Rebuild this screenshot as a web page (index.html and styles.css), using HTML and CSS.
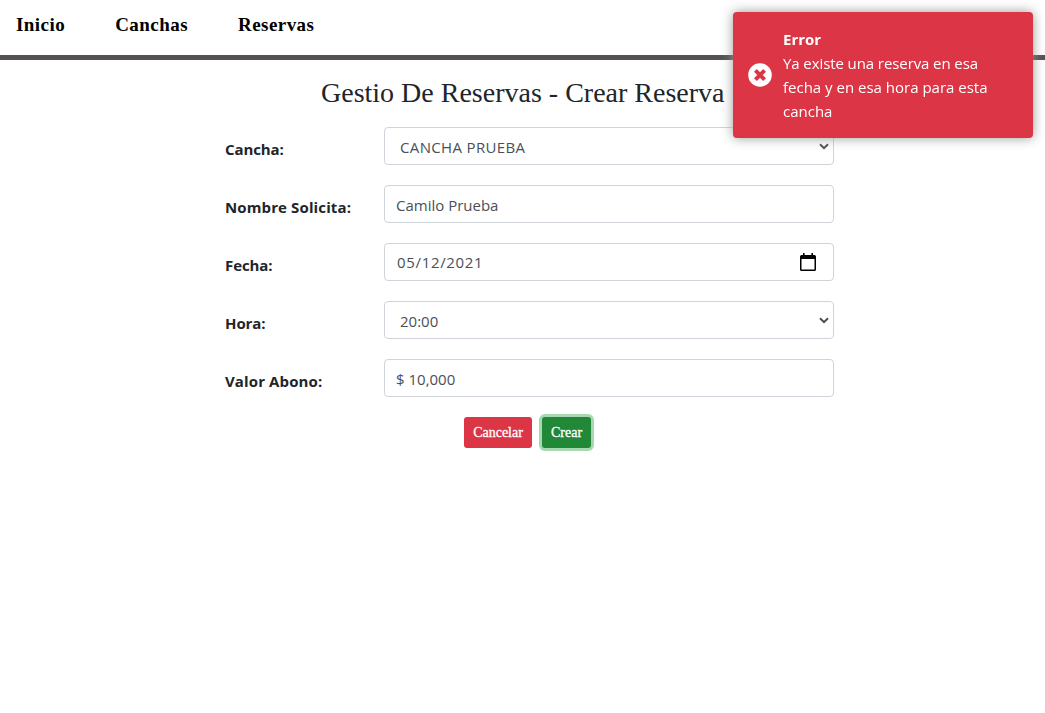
FILE: index.html
```html
<!DOCTYPE html>
<html lang="es">
<head>
<meta charset="utf-8">
<title>Gestio De Reservas</title>
<link rel="stylesheet" href="styles.css">
</head>
<body>
<nav class="nav"><a>Inicio</a><a>Canchas</a><a>Reservas</a></nav>
<main class="page">
  <h3 class="title">Gestio De Reservas - Crear Reserva</h3>
  <form class="form">
    <div class="row"><label class="label">Cancha:</label><div class="control select"><span class="caps">CANCHA PRUEBA</span><svg class="chevron" width="10" height="7" viewBox="0 0 10 7"><path d="M1 1.2l4 4 4-4" fill="none" stroke="#495057" stroke-width="2"/></svg></div></div>
    <div class="row"><label class="label label-wide">Nombre Solicita:</label><div class="control"><span>Camilo Prueba</span></div></div>
    <div class="row"><label class="label">Fecha:</label><div class="control date"><span class="day">05/12/2021</span><svg class="calendar" width="16" height="18" viewBox="0 0 16 18"><path d="M3 0h1.6v2h6.8V0H13v2h1.4A1.6 1.6 0 0 1 16 3.600V16.400A1.600 1.600 0 0 1 14.400 18H1.600A1.600 1.600 0 0 1 0 16.400V3.600A1.600 1.600 0 0 1 1.600 2H3zM1.500 6v10.500h13V6z" fill="#000" fill-rule="evenodd"/></svg></div></div>
    <div class="row"><label class="label">Hora:</label><div class="control select"><span>20:00</span><svg class="chevron" width="10" height="7" viewBox="0 0 10 7"><path d="M1 1.2l4 4 4-4" fill="none" stroke="#495057" stroke-width="2"/></svg></div></div>
    <div class="row"><label class="label label-wide">Valor Abono:</label><div class="control"><span>$ 10,000</span></div></div>
    <div class="actions"><button type="button" class="btn cancel">Cancelar</button><button type="button" class="btn create">Crear</button></div>
  </form>
</main>
<aside class="toast">
  <svg class="toast-icon" width="24" height="24" viewBox="0 0 24 24"><circle cx="12" cy="12" r="11.800" fill="#fff"/><path d="M7.400 7.400l9.200 9.200M16.600 7.400l-9.200 9.200" stroke="#dc3545" stroke-width="4"/></svg>
  <div class="toast-text"><strong>Error</strong><span class="line-first">Ya existe una reserva en esa</span><span>fecha y en esa hora para esta</span><span>cancha</span></div>
</aside>
</body>
</html>
```
FILE: styles.css
```css
* { box-sizing: border-box; }
body { margin: 0; min-height: 100vh; background: #fff; color: #212529; font: 15px/24px "Open Sans", "Noto Sans", sans-serif; }
.nav { height: 60px; padding: 10px 16px 0; border-bottom: 5px solid #545150; display: flex; gap: 50px; font: bold 19px/30px "Liberation Serif", serif; letter-spacing: .45px; color: #000; }
.page { padding: 16px 0 20px; }
.title { margin: 0; padding-left: 321px; font: 400 28px/34px "Liberation Serif", serif; white-space: nowrap; }
.form { width: 609px; margin: 17px 0 0 225px; }
.row { display: flex; height: 38px; margin-bottom: 20px; }
.label { width: 159px; padding-top: 10px; font-weight: 700; letter-spacing: -.1px; white-space: nowrap; }
.label-wide { letter-spacing: .12px; }
.control { flex: 1; display: flex; align-items: center; justify-content: space-between; padding: 2px 16px 0 11px; border: 1px solid #ced4da; border-radius: 4px; color: #495057; }
.select { padding: 2px 4px 0 15px; }
.date { padding: 0 17px 0 12px; }
.caps { letter-spacing: .35px; }
.day { letter-spacing: .67px; }
.calendar { margin-top: -1px; }
.chevron { margin-top: -2px; }
.actions { display: flex; gap: 10px; padding-left: 239px; }
.btn { height: 31px; border: 0; border-radius: 3px; padding: 0; color: #fff; font: 14px/21px "Liberation Serif", serif; -webkit-text-stroke: .3px #fff; }
.cancel { width: 68px; background: #dc3545; }
.create { width: 49px; background: #218838; box-shadow: 0 0 0 3px #a6d9b2; }
.toast { position: fixed; top: 12px; right: 12px; width: 300px; height: 126px; padding: 15px; display: flex; align-items: center; gap: 11px; border-radius: 4px; background: #dc3545; color: #fff; box-shadow: 0 0 12px #999; }
.toast-text { display: flex; flex-direction: column; white-space: nowrap; }
.line-first { letter-spacing: -.09px; }
```
